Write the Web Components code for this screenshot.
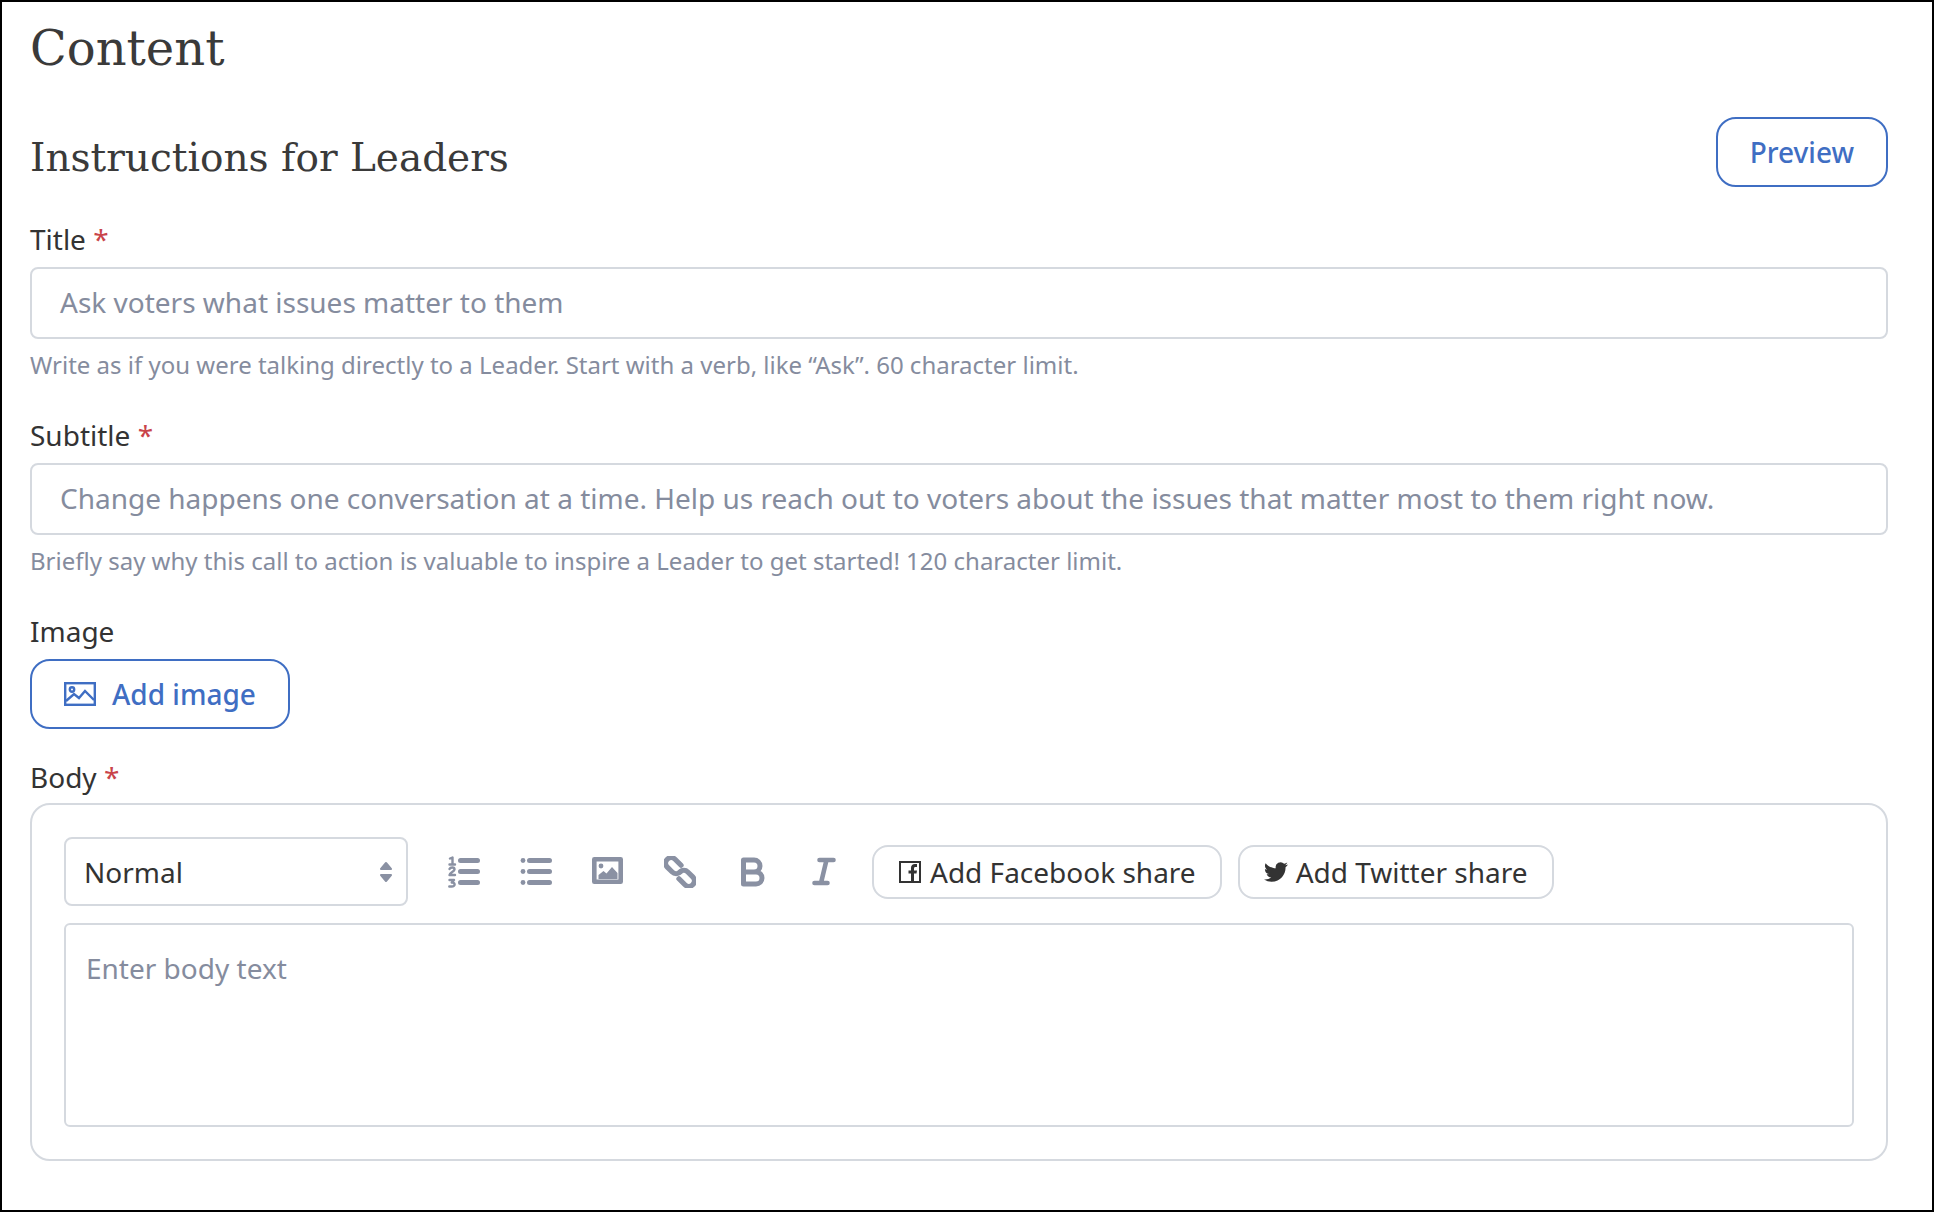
<!DOCTYPE html>
<html>
<head>
<meta charset="utf-8">
<title>Content</title>
<style>
  html, body { margin: 0; padding: 0; background: #fff; }
  body { font-family: "Noto Sans", sans-serif; color: #333; }
</style>
</head>
<body>

<content-page>
  <h-title slot="title">Content</h-title>
  <section-head slot="head">
    Instructions for Leaders
    <outline-button slot="action">Preview</outline-button>
  </section-head>

  <form-field label="Title" required help="Write as if you were talking directly to a Leader. Start with a verb, like “Ask”. 60 character limit.">
    <text-box>Ask voters what issues matter to them</text-box>
  </form-field>

  <form-field label="Subtitle" required help="Briefly say why this call to action is valuable to inspire a Leader to get started! 120 character limit.">
    <text-box>Change happens one conversation at a time. Help us reach out to voters about the issues that matter most to them right now.</text-box>
  </form-field>

  <form-field label="Image">
    <outline-button icon="image">Add image</outline-button>
  </form-field>

  <form-field label="Body" required tight>
    <rich-editor placeholder="Enter body text"></rich-editor>
  </form-field>
</content-page>

<script>
class ContentPage extends HTMLElement {
    constructor() {
        super();
        this.attachShadow({ mode: 'open' });
        this.shadowRoot.innerHTML = `
            <style>
                :host {
                    display: block;
                    box-sizing: border-box;
                    height: 1212px;
                    border: 2px solid #000;
                    padding: 13px 44px 0 28px;
                    overflow: hidden;
                }
                .fields { display: flex; flex-direction: column; gap: 30px; margin-top: 32px; }
            </style>
            <slot name="title"></slot>
            <slot name="head"></slot>
            <div class="fields"><slot></slot></div>
        `;
    }
}

class HTitle extends HTMLElement {
    constructor() {
        super();
        this.attachShadow({ mode: 'open' });
        this.shadowRoot.innerHTML = `
            <style>
                :host {
                    display: block;
                    font-family: "DejaVu Serif", serif;
                    font-size: 48px;
                    line-height: 66px;
                    color: #3a3a3a;
                }
            </style>
            <slot></slot>
        `;
    }
}

class SectionHead extends HTMLElement {
    constructor() {
        super();
        this.attachShadow({ mode: 'open' });
        this.shadowRoot.innerHTML = `
            <style>
                :host {
                    display: flex;
                    justify-content: space-between;
                    align-items: center;
                    margin-top: 36px;
                    font-family: "DejaVu Serif", serif;
                    font-size: 39px;
                    color: #3a3a3a;
                }
                .text { padding-top: 10px; }
            </style>
            <div class="text"><slot></slot></div>
            <slot name="action"></slot>
        `;
    }
}

class OutlineButton extends HTMLElement {
    constructor() {
        super();
        this.attachShadow({ mode: 'open' });
        const icon = this.getAttribute('icon') === 'image' ? `
            <svg width="32" height="24" viewBox="0 0 32 24" fill="none" stroke="#3f6ec3" stroke-width="2.4">
                <rect x="1.2" y="1.2" width="29.6" height="21.6"/>
                <circle cx="8" cy="7.5" r="2.2"/>
                <path d="M2 19 l8 -7 l5 4 l6 -7 l9 9"/>
            </svg>` : '';
        this.shadowRoot.innerHTML = `
            <style>
                :host {
                    display: inline-flex;
                    align-items: center;
                    box-sizing: border-box;
                    height: 70px;
                    padding: 0 32px;
                    gap: 16px;
                    border: 2px solid #3f6ec3;
                    border-radius: 20px;
                    color: #3f6ec3;
                    font-family: "Noto Sans", sans-serif;
                    font-size: 28px;
                    font-weight: 500;
                    background: #fff;
                }
            </style>
            ${icon}<slot></slot>
        `;
    }
}

class FormField extends HTMLElement {
    constructor() {
        super();
        this.attachShadow({ mode: 'open' });
    }

    connectedCallback() {
        const label = this.getAttribute('label') || '';
        const help = this.getAttribute('help');
        const star = this.hasAttribute('required') ? '<span class="star">*</span>' : '';
        this.shadowRoot.innerHTML = `
            <style>
                :host { display: block; }
                :host([tight]) { margin-top: -2px; }
                .label { font-size: 28px; line-height: 40px; color: #333; margin-bottom: ${this.hasAttribute('tight') ? 6 : 8}px; }
                .star { color: #c9444a; }
                .help { font-size: 24px; line-height: 36px; color: #858c9e; margin: 8px 0 2px; }
            </style>
            <div class="label">${label} ${star}</div>
            <slot></slot>
            ${help ? `<div class="help">${help}</div>` : ''}
        `;
    }
}

class TextBox extends HTMLElement {
    constructor() {
        super();
        this.attachShadow({ mode: 'open' });
        this.shadowRoot.innerHTML = `
            <style>
                :host {
                    display: flex;
                    align-items: center;
                    box-sizing: border-box;
                    height: 72px;
                    padding: 0 28px 2px;
                    border: 2px solid #d5d9df;
                    border-radius: 8px;
                    font-size: 28px;
                    color: #858c9e;
                    white-space: nowrap;
                }
            </style>
            <slot></slot>
        `;
    }
}

const TOOL_ICONS = {
    ol: `<path d="M12.500 4.500h17M12.500 15.500h17M12.500 26.500h17" stroke-width="5"/>
         <path d="M2 2.500l2.500-1v7M1.500 8.500h5.500M1.500 13c1-2 5-2 5 .5c0 2-5 3-5 5.500h5.500M1.500 24h4.500l-2.200 2.500c3.500-.5 4 4-.2 4h-2.300" stroke-width="2.400"/>`,
    ul: `<path d="M9.500 4.500h20M9.500 15.500h20M9.500 26.500h20" stroke-width="5"/>
         <circle cx="3" cy="4.500" r="2.400" fill="#8a91a3" stroke="none"/>
         <circle cx="3" cy="15.500" r="2.400" fill="#8a91a3" stroke="none"/>
         <circle cx="3" cy="26.500" r="2.400" fill="#8a91a3" stroke="none"/>`,
    image: `<rect x="2.300" y="3.300" width="26.400" height="22.400" stroke-width="4.600"/>
            <circle cx="9" cy="10" r="2.400" fill="#8a91a3" stroke="none"/>
            <path d="M6.500 23v-4l5-4l3 2.500l5.500-6.500l5.500 6v6z" fill="#8a91a3" stroke="none"/>`,
    link: `<g stroke-width="5.200" transform="rotate(-45 16 16)">
             <path d="M21.500 12V3.500a5.500 5.500 0 0 0-11 0V10.500a5.500 5.500 0 0 0 5.500 5.500"/>
             <path d="M10.500 20V28.500a5.500 5.500 0 0 0 11 0V21.500a5.500 5.500 0 0 0-5.500-5.500"/>
           </g>`,
    bold: `<path d="M7.500 4h10.500a6 6 0 0 1 0 12h-10.500zM7.500 16h12.500a6 6 0 0 1 0 12h-12.500z" stroke-width="5"/>`,
    italic: `<path d="M11.500 4h14M6.500 27h13M18.500 4l-5.500 23" stroke-width="4.600"/>`
};

class ToolIcon extends HTMLElement {
    constructor() {
        super();
        this.attachShadow({ mode: 'open' });
    }

    connectedCallback() {
        const body = TOOL_ICONS[this.getAttribute('name')] || '';
        this.shadowRoot.innerHTML = `
            <style>
                :host { display: block; width: 32px; height: 32px; }
                svg { display: block; }
            </style>
            <svg width="32" height="32" viewBox="0 0 32 32" fill="none" stroke="#8a91a3" stroke-linecap="round" stroke-linejoin="round">${body}</svg>
        `;
    }
}

class ShareButton extends HTMLElement {
    constructor() {
        super();
        this.attachShadow({ mode: 'open' });
    }

    connectedCallback() {
        const kind = this.getAttribute('kind');
        const icons = {
            facebook: `<svg width="22" height="22" viewBox="0 0 22 22">
                <rect x="1" y="1" width="20" height="20" fill="none" stroke="#333" stroke-width="2"/>
                <path d="M12 21v-8.500h-2.500v-3h2.500v-2.500c0-2.500 1.500-4 4-4h2v3h-1.500c-1 0-1.500 .5-1.500 1.500v2h3l-.5 3h-2.500v8.500z" fill="#333"/>
            </svg>`,
            twitter: `<svg width="24" height="24" viewBox="0 0 24 24"><path fill="#333" d="M23.953 4.57a10 10 0 01-2.825.775 4.958 4.958 0 002.163-2.723c-.951.555-2.005.959-3.127 1.184a4.92 4.92 0 00-8.384 4.482C7.69 8.095 4.067 6.13 1.64 3.162a4.822 4.822 0 00-.666 2.475c0 1.71.87 3.213 2.188 4.096a4.904 4.904 0 01-2.228-.616v.06a4.923 4.923 0 003.946 4.827 4.996 4.996 0 01-2.212.085 4.936 4.936 0 004.604 3.417 9.867 9.867 0 01-6.102 2.105c-.39 0-.779-.023-1.17-.067a13.995 13.995 0 007.557 2.209c9.053 0 13.998-7.496 13.998-13.985 0-.21 0-.42-.015-.63A9.935 9.935 0 0024 4.59z"/></svg>`
        };
        this.shadowRoot.innerHTML = `
            <style>
                :host {
                    display: inline-flex;
                    align-items: center;
                    box-sizing: border-box;
                    height: 54px;
                    padding: 0 24px 0 ${kind === 'facebook' ? 25 : 24}px;
                    gap: ${kind === 'facebook' ? 9 : 8}px;
                    border: 2px solid #d5d9df;
                    border-radius: 16px;
                    font-size: 28px;
                    color: #333;
                    white-space: nowrap;
                }
                svg { flex: none; }
            </style>
            ${icons[kind] || ''}<slot></slot>
        `;
    }
}

class RichEditor extends HTMLElement {
    constructor() {
        super();
        this.attachShadow({ mode: 'open' });
    }

    connectedCallback() {
        const placeholder = this.getAttribute('placeholder') || '';
        this.shadowRoot.innerHTML = `
            <style>
                :host {
                    display: block;
                    box-sizing: border-box;
                    height: 358px;
                    padding: 32px;
                    border: 2px solid #d5d9df;
                    border-radius: 20px;
                }
                .bar { display: flex; align-items: center; height: 69px; }
                .select {
                    display: flex;
                    align-items: center;
                    justify-content: space-between;
                    box-sizing: border-box;
                    width: 344px;
                    height: 69px;
                    padding: 0 14px 0 18px;
                    margin-right: 40px;
                    border: 2px solid #d5d9df;
                    border-radius: 8px;
                    font-size: 28px;
                    color: #333;
                }
                .icons { display: flex; gap: 40px; margin-right: 32px; }
                .shares { display: flex; gap: 16px; }
                .area {
                    box-sizing: border-box;
                    height: 204px;
                    margin-top: 17px;
                    padding: 23px 20px;
                    border: 2px solid #d5d9df;
                    border-radius: 6px;
                    font-size: 28px;
                    line-height: 40px;
                    color: #858c9e;
                }
            </style>
            <div class="bar">
                <div class="select">
                    <span>Normal</span>
                    <svg width="12" height="22" viewBox="0 0 12 22" fill="#8a91a3" stroke="#8a91a3" stroke-width="2" stroke-linejoin="round">
                        <path d="M6 2l5 6h-10zM6 20l5-6h-10z"/>
                    </svg>
                </div>
                <div class="icons">
                    <tool-icon name="ol"></tool-icon>
                    <tool-icon name="ul"></tool-icon>
                    <tool-icon name="image"></tool-icon>
                    <tool-icon name="link"></tool-icon>
                    <tool-icon name="bold"></tool-icon>
                    <tool-icon name="italic"></tool-icon>
                </div>
                <div class="shares">
                    <share-button kind="facebook">Add Facebook share</share-button>
                    <share-button kind="twitter">Add Twitter share</share-button>
                </div>
            </div>
            <div class="area">${placeholder}</div>
        `;
    }
}

customElements.define('content-page', ContentPage);
customElements.define('h-title', HTitle);
customElements.define('section-head', SectionHead);
customElements.define('outline-button', OutlineButton);
customElements.define('form-field', FormField);
customElements.define('text-box', TextBox);
customElements.define('tool-icon', ToolIcon);
customElements.define('share-button', ShareButton);
customElements.define('rich-editor', RichEditor);
</script>
</body>
</html>
